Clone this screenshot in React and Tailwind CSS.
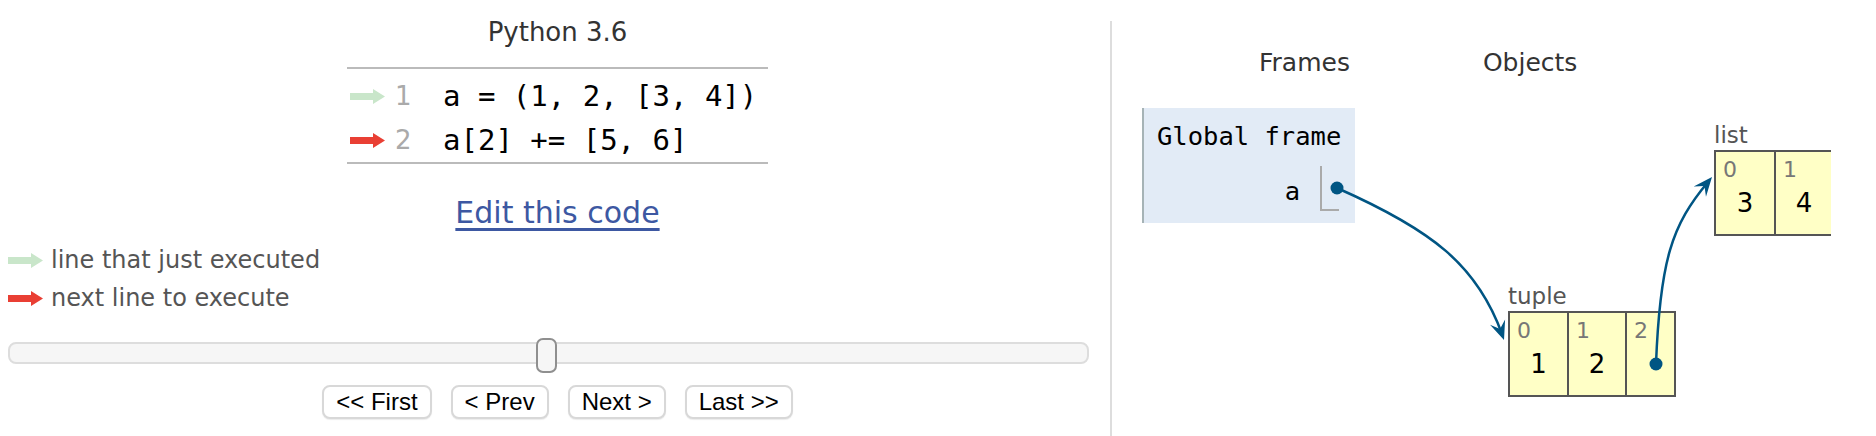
import React from 'react';

const SANS = { fontFamily: '"DejaVu Sans", Verdana, sans-serif' };
const MONO = { fontFamily: '"DejaVu Sans Mono", monospace' };

const LineArrow = ({ color }) => (
  <svg width="35" height="15" viewBox="0 0 35 15" className="shrink-0">
    <polygon points="0,4 23,4 23,0 35,7.5 23,15 23,11 0,11" fill={color} />
  </svg>
);

const codeLines = [
  { n: 1, text: 'a = (1, 2, [3, 4])', arrow: '#c9e6ca' },
  { n: 2, text: 'a[2] += [5, 6]', arrow: '#e93f34' },
];

const navButtons = ['<< First', '< Prev', 'Next >', 'Last >>'];

// arrowhead polygon for a connector ending at tip, coming from "from"
const headPoints = (from, tip, len = 19, half = 8) => {
  const dx = tip[0] - from[0];
  const dy = tip[1] - from[1];
  const l = Math.hypot(dx, dy);
  const ux = dx / l;
  const uy = dy / l;
  const nx = -uy;
  const ny = ux;
  const bx = tip[0] - ux * len;
  const by = tip[1] - uy * len;
  const pts = [
    [tip[0], tip[1]],
    [bx + nx * half, by + ny * half],
    [tip[0] - ux * len * 0.62, tip[1] - uy * len * 0.62],
    [bx - nx * half, by - ny * half],
  ];
  return pts.map((p) => p.join(',')).join(' ');
};

const HeapCell = ({ index, value, w }) => (
  <div className={`${w} h-full border-l-2 first:border-l-0 border-[#555] bg-[#ffffc6] flex flex-col`}>
    <div className="pl-[7px] pt-[5px] text-[22px] leading-[26px] text-[#777]" style={SANS}>
      {index}
    </div>
    <div className="mt-[5px] text-center text-[26px] leading-[30px] text-black" style={SANS}>
      {value}
    </div>
  </div>
);

const HeapObject = ({ label, cells, className }) => (
  <div className={className}>
    <div className="h-[26px] text-[23px] leading-[26px] text-[#555]" style={SANS}>
      {label}
    </div>
    <div className="mt-[2px] flex h-[86px] w-max border-2 border-[#555]">
      {cells.map((c) => (
        <HeapCell key={c.index} {...c} />
      ))}
    </div>
  </div>
);

export default function App() {
  return (
    <div className="flex h-[436px] w-[1876px] overflow-hidden bg-white">
      {/* left: code + controls */}
      <div className="w-[1110px] shrink-0 pl-[5px]">
        <div className="flex flex-col items-center">
          <div className="mt-[17px] h-[30px] text-[26px] leading-[30px] text-[#333]" style={SANS}>
            Python 3.6
          </div>

          <div className="mt-[20px] w-[421px] border-y-2 border-[#bbb] pt-[5px]">
            {codeLines.map((line) => (
              <div key={line.n} className="flex h-[44px] items-center">
                <div className="ml-[3px]">
                  <LineArrow color={line.arrow} />
                </div>
                <span className="ml-[10px] w-[20px] text-[26px] leading-[44px] text-[#aaa]" style={SANS}>
                  {line.n}
                </span>
                <span className="ml-[28px] whitespace-pre text-[29px] leading-[44px] text-black" style={MONO}>
                  {line.text}
                </span>
              </div>
            ))}
          </div>

          <a
            href="#"
            className="mt-[31px] h-[36px] text-[30px] leading-[36px] text-[#3d58a2] underline underline-offset-[5px]"
            style={SANS}
          >
            Edit this code
          </a>
        </div>

        <div className="mt-[10px] pl-[3px]" style={SANS}>
          <div className="flex h-[38px] items-center">
            <LineArrow color="#c9e6ca" />
            <span className="ml-[8px] text-[24px] leading-[38px] text-[#555]">line that just executed</span>
          </div>
          <div className="flex h-[38px] items-center">
            <LineArrow color="#e93f34" />
            <span className="ml-[8px] text-[24px] leading-[38px] text-[#555]">next line to execute</span>
          </div>
        </div>

        {/* slider */}
        <div className="relative ml-[3px] mt-[25px] h-[22px] w-[1081px] rounded-[8px] border-2 border-[#dddddd] bg-[#f6f6f6]">
          <div className="absolute left-[526px] top-[-6px] h-[35px] w-[21px] rounded-[7px] border-2 border-[#8f8f8f] bg-[#f6f6f6]" />
        </div>

        <div className="mt-[21px] flex justify-center gap-[19px]">
          {navButtons.map((b) => (
            <button
              key={b}
              className="h-[34px] rounded-[8px] border-2 border-[#d8d8d8] bg-white px-[12px] text-[24px] leading-[28px] text-black shadow-[0_1px_1px_rgba(0,0,0,0.08)]"
              style={{ fontFamily: '"Liberation Sans", Arial, sans-serif' }}
            >
              {b}
            </button>
          ))}
        </div>
      </div>

      {/* divider */}
      <div className="mt-[21px] w-[2px] shrink-0 bg-[#dddddd]" />

      {/* right: frames + objects */}
      <div className="relative w-[719px] shrink-0 overflow-hidden">
        <div className="mt-[48px] flex h-[30px] text-[25px] leading-[30px] text-[#333]" style={SANS}>
          <span className="ml-[147px]">Frames</span>
          <span className="ml-[133px]">Objects</span>
        </div>

        <div className="mt-[30px] flex items-start">
          <div className="ml-[30px] w-[213px] shrink-0 border-l-2 border-[#a6b3b6] bg-[#e2ebf6] pb-[12px]" style={MONO}>
            <div className="pl-[13px] pt-[13px] h-[43px] text-[25.5px] leading-[30px] text-black">Global frame</div>
            <div className="mt-[15px] flex items-start justify-end pr-[16px]">
              <span className="mt-[10px] mr-[20px] text-[25.5px] leading-[30px] text-black">a</span>
              <div className="h-[45px] w-[19px] border-b-2 border-l-2 border-[#aaa]" />
            </div>
          </div>

          <div className="ml-[153px] w-[400px] shrink-0">
            <HeapObject
              label="list"
              className="ml-[206px] mt-[14px]"
              cells={[
                { index: 0, value: 3, w: 'w-[58px]' },
                { index: 1, value: 4, w: 'w-[58px]' },
              ]}
            />
            <HeapObject
              label="tuple"
              className="mt-[47px]"
              cells={[
                { index: 0, value: 1, w: 'w-[57px]' },
                { index: 1, value: 2, w: 'w-[58px]' },
                { index: 2, value: '', w: 'w-[49px]' },
              ]}
            />
          </div>
        </div>

        {/* connectors */}
        <svg className="pointer-events-none absolute inset-0" width="719" height="436">
          <path d="M225,188 C320,230 365,265 390,334" fill="none" stroke="#005583" strokeWidth="2.5" />
          <polygon points={headPoints([365, 265], [392, 340])} fill="#005583" />
          <circle cx="225" cy="188" r="6.5" fill="#005583" />

          <path d="M544,364 C548,260 560,225 596,182" fill="none" stroke="#005583" strokeWidth="2.5" />
          <polygon points={headPoints([560, 225], [600, 177])} fill="#005583" />
          <circle cx="544" cy="364" r="6.5" fill="#005583" />
        </svg>
      </div>
    </div>
  );
}
